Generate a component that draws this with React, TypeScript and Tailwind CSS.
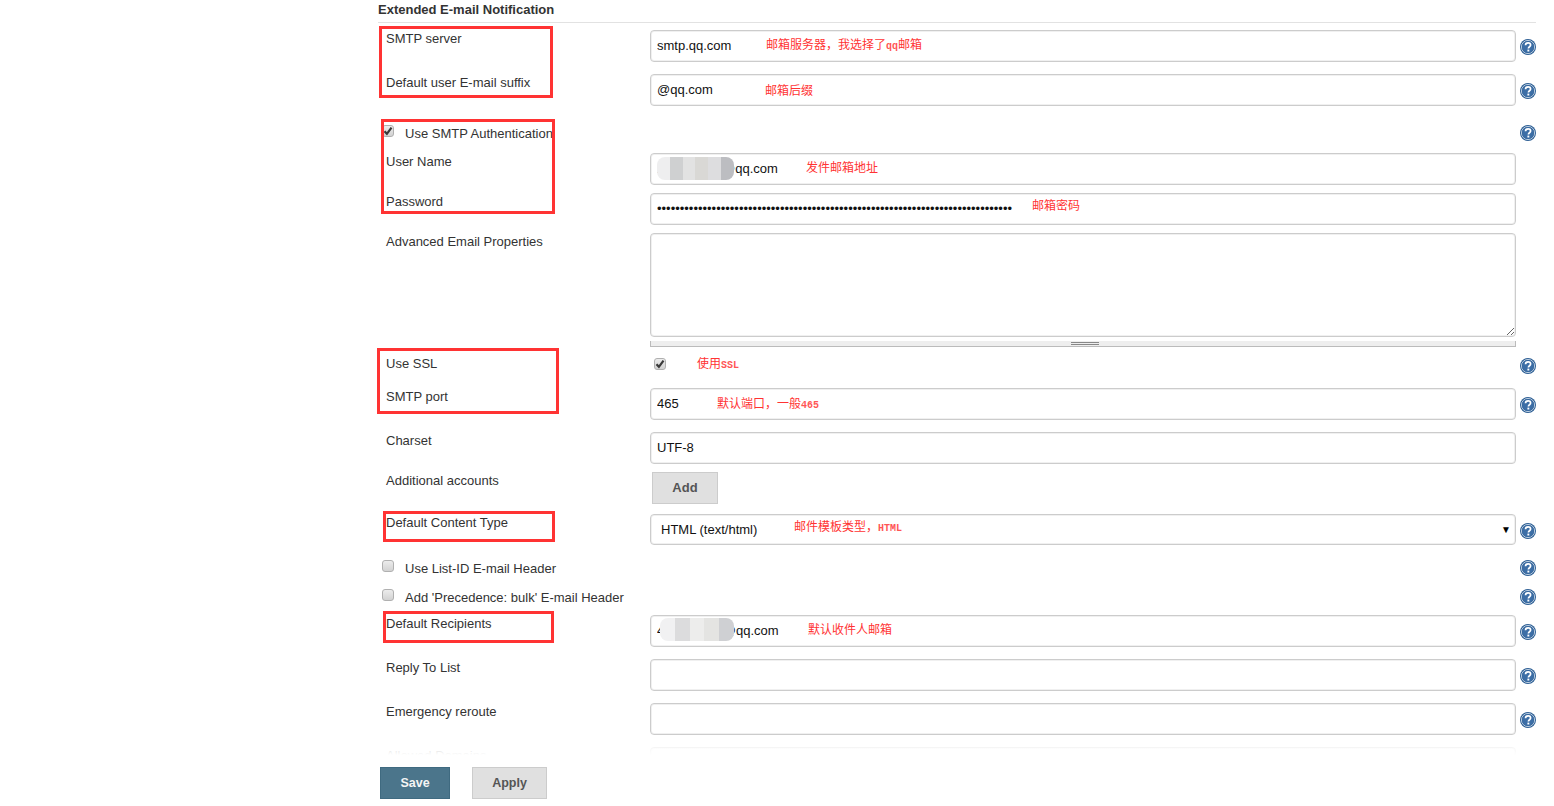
import React from "react";

const annotationFont = "font-['Noto_Sans_CJK_SC',sans-serif] text-[12px] leading-[16px] text-[#f33]";
const latinNote = "font-['Liberation_Mono',monospace] text-[10px] font-bold text-[#f55]";

function HelpIcon() {
  return (
    <svg width="16" height="16" viewBox="0 0 16 16" className="shrink-0">
      <circle cx="8" cy="8" r="8" fill="#2f6095" />
      <circle cx="8" cy="8" r="6.6" fill="none" stroke="#dbe6f1" strokeWidth="0.8" />
      <circle cx="8" cy="8" r="5.8" fill="#3c6ea6" />
      <path
        d="M5.5 6.2c0-1.5 1.1-2.4 2.6-2.4s2.5.9 2.5 2.1c0 1.9-2.2 1.8-2.2 3.6"
        fill="none"
        stroke="#fff"
        strokeWidth="1.7"
      />
      <rect x="7.4" y="10.6" width="1.9" height="1.9" fill="#fff" />
    </svg>
  );
}

function CheckBox({ checked }: { checked?: boolean }) {
  return (
    <span className="flex h-[12px] w-[12px] items-center justify-center rounded-[3px] border border-[#b0b0b0] bg-gradient-to-b from-[#ececec] to-[#d2d2d2]">
      {checked && (
        <svg width="10" height="10" viewBox="0 0 10 10">
          <path d="M1.5 5.2l2.4 2.6 4.6-6.2" fill="none" stroke="#3a3a3a" strokeWidth="2.2" />
        </svg>
      )}
    </span>
  );
}

function Row({
  className,
  label,
  help = true,
  helpClass = "pt-[2px]",
  children,
}: {
  className: string;
  label?: React.ReactNode;
  help?: boolean;
  helpClass?: string;
  children?: React.ReactNode;
}) {
  return (
    <div className={`flex ${className}`}>
      <div className="w-[272px] shrink-0 pl-[8px] pt-[1px] text-[13px] leading-[16px] text-[#333]">{label}</div>
      <div className="relative w-[866px] shrink-0">{children}</div>
      <div className={`flex w-[20px] shrink-0 items-center justify-end ${helpClass}`}>{help && <HelpIcon />}</div>
    </div>
  );
}

function TextBox({ value = "", type = "text" }: { value?: string; type?: string }) {
  return (
    <input
      readOnly
      type={type}
      value={value}
      className="h-full w-full rounded-[4px] border border-[#cccccc] bg-white px-[6px] pb-[1px] text-[13px] text-[#111] shadow-[inset_0_0_0_1px_#f0f0f0] outline-none"
    />
  );
}

function CheckRow({ className, text, checked }: { className: string; text: string; checked?: boolean }) {
  return (
    <Row
      className={className}
      helpClass=""
      label={
        <div className="-ml-[4px] -mt-[1px] flex items-start">
          <CheckBox checked={checked} />
          <span className="ml-[11px] mt-[1px]">{text}</span>
        </div>
      }
    />
  );
}

function Blur({ className, colors }: { className: string; colors: string[] }) {
  return (
    <div className={`absolute flex overflow-hidden rounded-[8px] ${className}`}>
      {colors.map((c, i) => (
        <div key={i} className="h-full flex-1" style={{ background: c }} />
      ))}
    </div>
  );
}

function Note({ className, children }: { className: string; children: React.ReactNode }) {
  return <span className={`absolute whitespace-nowrap ${annotationFont} ${className}`}>{children}</span>;
}

function RedBox({ className }: { className: string }) {
  return <div className={`pointer-events-none absolute border-[3px] border-[#f33] ${className}`} />;
}

export default function App() {
  return (
    <div className="relative flex h-[806px] w-[1554px] flex-col overflow-hidden bg-white pl-[378px] font-['Liberation_Sans',Arial,sans-serif]">
      <div className="relative h-[755px] w-[1158px] shrink-0 overflow-hidden">
        <div className="h-[23px] border-b border-[#e2e2e2] text-[13px] font-bold leading-[19px] text-[#333]">
          Extended E-mail Notification
        </div>

        <Row className="mt-[7px] h-[32px]" label="SMTP server">
          <TextBox value="smtp.qq.com" />
          <Note className="left-[116px] top-[6px]">
            邮箱服务器，我选择了<span className={latinNote}>qq</span>邮箱
          </Note>
        </Row>
        <Row className="mt-[12px] h-[32px]" label="Default user E-mail suffix">
          <TextBox value="@qq.com" />
          <Note className="left-[115px] top-[8px]">邮箱后缀</Note>
        </Row>
        <CheckRow className="mt-[19px] h-[16px]" text="Use SMTP Authentication" checked />
        <Row className="mt-[12px] h-[32px]" label="User Name" help={false}>
          <TextBox value="xxxxxxxxxx@qq.com" />
          <Blur
            className="left-[7px] top-[4px] h-[23px] w-[77px]"
            colors={["#eeeeef", "#cfd0d1", "#e2e2e2", "#d9d8d5", "#dddddf", "#bcbdc1"]}
          />
          <Note className="left-[156px] top-[6px]">发件邮箱地址</Note>
        </Row>
        <Row className="mt-[8px] h-[32px]" label="Password" help={false}>
          <TextBox value={"•".repeat(78)} />
          <Note className="left-[382px] top-[4px]">邮箱密码</Note>
        </Row>
        <Row className="mt-[8px] h-[114px]" label="Advanced Email Properties" help={false}>
          <textarea
            readOnly
            className="block h-[104px] w-full rounded-[4px] border border-[#cccccc] bg-white shadow-[inset_0_0_0_1px_#f0f0f0] outline-none"
          />
          <div className="relative mt-[4px] h-[6px] border-x border-b border-[#bbb] bg-[#eee]">
            <div className="absolute left-[420px] top-[1px] h-[3px] w-[28px] border-y border-[#888]" />
          </div>
        </Row>
        <Row className="mt-[8px] h-[16px]" label="Use SSL" helpClass="pt-[6px]">
          <span className="absolute left-[4px] top-[3px]">
            <CheckBox checked />
          </span>
          <Note className="left-[47px] top-[0px]">
            使用<span className={latinNote}>SSL</span>
          </Note>
        </Row>
        <Row className="mt-[17px] h-[32px]" label="SMTP port">
          <TextBox value="465" />
          <Note className="left-[67px] top-[7px]">
            默认端口，一般<span className={latinNote}>465</span>
          </Note>
        </Row>
        <Row className="mt-[12px] h-[32px]" label="Charset" help={false}>
          <TextBox value="UTF-8" />
        </Row>
        <Row className="mt-[8px] h-[32px]" label="Additional accounts" help={false}>
          <button className="ml-[2px] h-[32px] w-[66px] border border-[#ccc] bg-[#e0e0e0] text-[13px] font-bold text-[#555]">
            Add
          </button>
        </Row>
        <Row className="mt-[10px] h-[31px]" label="Default Content Type">
          <div className="flex h-full w-full items-center justify-between rounded-[4px] border border-[#cccccc] bg-white pl-[10px] pr-[4px] text-[13px] text-[#111] shadow-[inset_0_0_0_1px_#f0f0f0]">
            <span>HTML (text/html)</span>
            <span className="text-[10px] text-black">▼</span>
          </div>
          <Note className="left-[144px] top-[4px]">
            邮件模板类型，<span className={latinNote}>HTML</span>
          </Note>
        </Row>
        <CheckRow className="mt-[15px] h-[16px]" text="Use List-ID E-mail Header" />
        <CheckRow className="mt-[13px] h-[16px]" text="Add 'Precedence: bulk' E-mail Header" />
        <Row className="mt-[10px] h-[32px]" label="Default Recipients">
          <TextBox value="4xxxxxxxxx@qq.com" />
          <Blur
            className="left-[10px] top-[3px] h-[23px] w-[74px]"
            colors={["#f1f1f2", "#dcdcdd", "#ededec", "#e4e4e2", "#cfd0d3"]}
          />
          <Note className="left-[158px] top-[6px]">默认收件人邮箱</Note>
        </Row>
        <Row className="mt-[12px] h-[32px]" label="Reply To List">
          <TextBox />
        </Row>
        <Row className="mt-[12px] h-[32px]" label="Emergency reroute">
          <TextBox />
        </Row>
        <Row className="mt-[12px] h-[32px]" label="Allowed Domains" help={false}>
          <TextBox />
        </Row>
        <div className="pointer-events-none absolute bottom-0 left-0 h-[12px] w-full bg-gradient-to-b from-white/70 to-white" />
      </div>

      <div className="flex h-[51px] items-start pl-[2px] pt-[12px]">
        <button className="h-[32px] w-[70px] border border-[#3f6a80] bg-[#4b758b] text-[12.5px] font-bold text-[#f4f4f4]">
          Save
        </button>
        <button className="ml-[22px] h-[32px] w-[75px] border border-[#ccc] bg-[#e0e0e0] text-[12.5px] font-bold text-[#555]">
          Apply
        </button>
      </div>

      <RedBox className="left-[379px] top-[26px] h-[72px] w-[174px]" />
      <RedBox className="left-[381px] top-[119px] h-[95px] w-[174px]" />
      <RedBox className="left-[377px] top-[348px] h-[66px] w-[182px]" />
      <RedBox className="left-[383px] top-[511px] h-[31px] w-[172px]" />
      <RedBox className="left-[383px] top-[611px] h-[32px] w-[171px]" />
    </div>
  );
}
